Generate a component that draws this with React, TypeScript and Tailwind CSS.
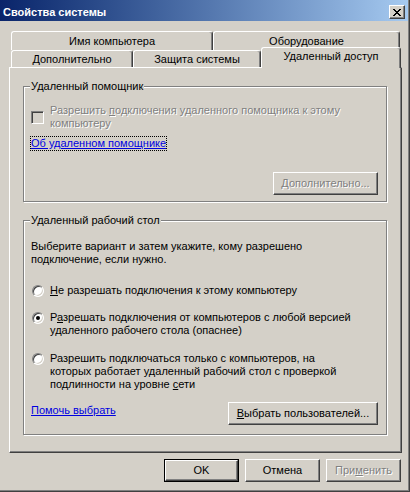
import React from "react";

const bevel =
  "border border-t-white border-l-white border-r-[#404040] border-b-[#404040] shadow-[inset_-1px_-1px_0_#808080]";

const disabledText = "text-[#808080] [text-shadow:1px_1px_0_#ffffff]";

const CloseGlyph = () => {
  // classic 8x7 pixel X
  const rows = [
    [[0, 2], [6, 2]],
    [[1, 2], [5, 2]],
    [[2, 4]],
    [[3, 2]],
    [[2, 4]],
    [[1, 2], [5, 2]],
    [[0, 2], [6, 2]],
  ];
  return (
    <svg width="8" height="7" viewBox="0 0 8 7" shapeRendering="crispEdges">
      {rows.map((r, y) =>
        r.map(([x, w], i) => <rect key={`${y}-${i}`} x={x} y={y} width={w} height={1} fill="#000" />)
      )}
    </svg>
  );
};

const Button = ({
  children,
  width,
  disabled,
  isDefault,
}: {
  children: React.ReactNode;
  width: string;
  disabled?: boolean;
  isDefault?: boolean;
}) => {
  const face = (
    <div
      className={`h-full w-full flex items-center justify-center bg-[#d4d0c8] ${bevel} ${
        disabled ? disabledText : "text-black"
      }`}
    >
      {children}
    </div>
  );
  if (isDefault) {
    return <div className={`${width} h-[23px] border border-black`}>{face}</div>;
  }
  return <div className={`${width} h-[23px]`}>{face}</div>;
};

const Radio = ({ checked }: { checked?: boolean }) => (
  <div className="mt-[1px] ml-[1px] w-[12px] h-[12px] shrink-0 rounded-full border border-t-[#808080] border-l-[#808080] border-r-white border-b-white bg-white shadow-[inset_1px_1px_0_#404040,inset_-1px_-1px_0_#d4d0c8] flex items-center justify-center">
    {checked && <div className="w-[4px] h-[4px] rounded-full bg-black" />}
  </div>
);

const GroupLabel = ({ children }: { children: React.ReactNode }) => (
  <div className="-mt-[7px] -ml-[1px] h-[13px] flex">
    <span className="bg-[#d4d0c8] px-[1px]">{children}</span>
  </div>
);

const groupBox =
  "w-[364px] border border-[#808080] shadow-[1px_1px_0_#ffffff,inset_1px_1px_0_#ffffff] pl-[7px] pr-[8px]";

export default function App() {
  return (
    <div className="w-[410px] h-[492px] bg-[#d4d0c8] flex flex-col border-r border-b border-[#404040] shadow-[inset_-1px_-1px_0_#808080] font-['Liberation_Sans',Arial,sans-serif] text-[11px] leading-[13px] text-black select-none">
      {/* title bar */}
      <div className="h-[21px] mr-[1px] flex items-start justify-between bg-linear-to-r from-[#0a246a] to-[#a6caf0] pl-[3px] pr-[3px]">
        <span className="pt-[6px] font-bold text-white">Свойства системы</span>
        <div className={`mt-[5px] w-[16px] h-[14px] bg-[#d4d0c8] flex items-center justify-center ${bevel}`}>
          <CloseGlyph />
        </div>
      </div>

      {/* tabs */}
      <div className="mt-[10px] ml-[11px] flex flex-col">
        <div className="flex h-[19px]">
          <div className="w-[202px] h-[19px] pt-[3px] flex justify-center border-t border-l border-r border-t-white border-l-white border-r-[#404040] shadow-[inset_-1px_0_0_#808080] rounded-t-[3px]">
            Имя компьютера
          </div>
          <div className="w-[187px] h-[19px] pt-[3px] flex justify-center border-t border-l border-r border-t-white border-l-white border-r-[#404040] shadow-[inset_-1px_0_0_#808080] rounded-t-[3px]">
            Оборудование
          </div>
        </div>
        <div className="flex h-[17px]">
          <div className="w-[122px] h-[17px] pt-[2px] flex justify-center border-t border-l border-r border-t-white border-l-white border-r-[#404040] shadow-[inset_-1px_0_0_#808080] rounded-t-[3px]">
            Дополнительно
          </div>
          <div className="w-[128px] h-[17px] pt-[2px] flex justify-center border-t border-l border-r border-t-white border-l-white border-r-[#404040] shadow-[inset_-1px_0_0_#808080] rounded-t-[3px]">
            Защита системы
          </div>
          <div className="relative z-10 -mt-[3px] w-[140px] h-[21px] pt-[2px] flex justify-center bg-[#d4d0c8] border-t border-l border-r border-t-white border-l-white border-r-[#404040] shadow-[inset_-1px_0_0_#808080] rounded-t-[3px]">
            Удаленный доступ
          </div>
        </div>
      </div>

      {/* tab panel */}
      <div className="ml-[9px] w-[393px] h-[386px] border-t border-l border-t-white border-l-white border-r border-b border-r-[#404040] border-b-[#404040] shadow-[inset_-1px_-1px_0_#808080] pl-[13px] pt-[18px]">
        {/* remote assistance */}
        <div className={`${groupBox} pb-[6px]`}>
          <GroupLabel>Удаленный помощник</GroupLabel>
          <div className="mt-[11px] flex items-center gap-[6px]">
            <div className="w-[13px] h-[13px] shrink-0 border border-t-[#808080] border-l-[#808080] border-r-white border-b-white bg-[#d4d0c8] shadow-[inset_1px_1px_0_#404040,inset_-1px_-1px_0_#d4d0c8]" />
            <div className={disabledText}>
              Разрешить <span className="underline">п</span>одключения удаленного помощника к этому
              <br />
              компьютеру
            </div>
          </div>
          <div className="mt-[7px] flex">
            <span className="outline outline-1 outline-dotted outline-black text-[#0000e0] underline">
              Об удаленном помощнике
            </span>
          </div>
          <div className="mt-[22px] flex justify-end">
            <Button width="w-[105px]" disabled>
              <span>
                <span className="underline">Д</span>ополнительно...
              </span>
            </Button>
          </div>
        </div>

        {/* remote desktop */}
        <div className={`${groupBox} mt-[18px] pb-[9px]`}>
          <GroupLabel>Удаленный рабочий стол</GroupLabel>
          <div className="mt-[13px]">
            Выберите вариант и затем укажите, кому разрешено
            <br />
            подключение, если нужно.
          </div>

          <div className="mt-[18px] flex items-start gap-[6px]">
            <Radio />
            <div>
              <span className="underline">Н</span>е разрешать подключения к этому компьютеру
            </div>
          </div>

          <div className="mt-[14px] flex items-start gap-[6px]">
            <Radio checked />
            <div>
              Р<span className="underline">а</span>зрешать подключения от компьютеров с любой версией
              <br />
              удаленного рабочего стола (опаснее)
            </div>
          </div>

          <div className="mt-[15px] flex items-start gap-[6px]">
            <Radio />
            <div>
              Разрешить подключаться только с компьютеров, на
              <br />
              которых работает удаленный рабочий стол с проверкой
              <br />
              подлинности на уровне <span className="underline">с</span>ети
            </div>
          </div>

          <div className="mt-[11px] flex items-center justify-between">
            <span className="text-[#0000e0] underline -mt-[6px]">Помочь выбрать</span>
            <Button width="w-[150px]">
              <span>
                <span className="underline">В</span>ыбрать пользователей...
              </span>
            </Button>
          </div>
        </div>
      </div>

      {/* dialog buttons */}
      <div className="mt-[6px] ml-[164px] flex gap-[6px]">
        <Button width="w-[75px]" isDefault>
          OK
        </Button>
        <Button width="w-[75px]">Отмена</Button>
        <Button width="w-[75px]" disabled>
          <span>
            При<span className="underline">м</span>енить
          </span>
        </Button>
      </div>
    </div>
  );
}
